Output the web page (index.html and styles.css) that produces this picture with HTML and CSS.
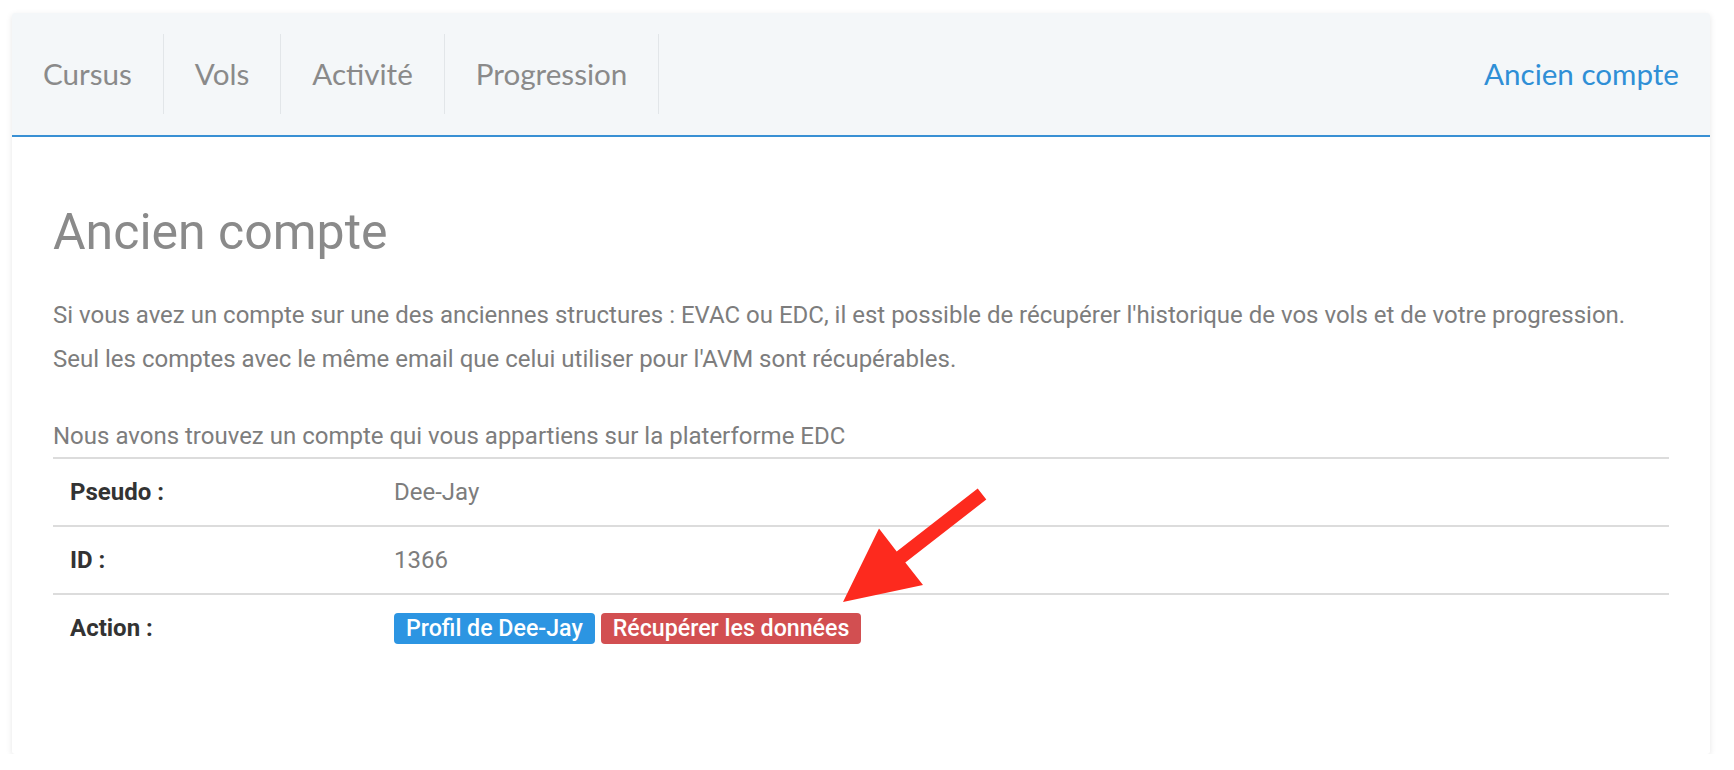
FILE: index.html
```html
<!DOCTYPE html>
<html lang="fr">
<head>
    <meta charset="UTF-8">
    <meta name="viewport" content="width=device-width, initial-scale=1.0">
    <title>Ancien compte</title>
    <link rel="stylesheet" href="styles.css">
</head>
<body>
    <div class="card">
        <div class="card-header">
            <ul class="tabs">
                <li><a href="#">Cursus</a></li>
                <li><a href="#">Vols</a></li>
                <li><a href="#">Activité</a></li>
                <li><a href="#">Progression</a></li>
            </ul>
            <a href="#" class="tab-active">Ancien compte</a>
        </div>
        <div class="card-body">
            <h1>Ancien compte</h1>
            <p class="intro">Si vous avez un compte sur une des anciennes structures : EVAC ou EDC, il est possible de récupérer l'historique de vos vols et de votre progression.<br>
            Seul les comptes avec le même email que celui utiliser pour l'AVM sont récupérables.</p>

            <div class="found">Nous avons trouvez un compte qui vous appartiens sur la platerforme EDC</div>
            <table class="account">
                <tr>
                    <th>Pseudo :</th>
                    <td>Dee-Jay</td>
                </tr>
                <tr>
                    <th>ID :</th>
                    <td>1366</td>
                </tr>
                <tr>
                    <th>Action :</th>
                    <td>
                        <a href="#" class="label label-blue">Profil de Dee-Jay</a>
                        <a href="#" class="label label-red">Récupérer les données</a>
                    </td>
                </tr>
            </table>
        </div>
    </div>

    <!-- annotation arrow -->
    <svg class="arrow" width="170" height="135" viewBox="0 0 170 135">
        <polygon points="147.7,8.5 156.3,19.5 75.3,82.5 93,105 13,122 49,48.6 66.7,71.5" fill="#fd2a1e"/>
    </svg>
</body>
</html>
```

FILE: styles.css
```css
body {
    margin: 0;
    background-color: #fff;
    font-family: Roboto, "Liberation Sans", sans-serif;
    position: relative;
}
.card {
    margin: 13px 24px 0 12px;
    height: 741px;
    background-color: #fff;
    border-radius: 3px;
    box-shadow: 0 2px 6px rgba(0,0,0,0.1);
    overflow: hidden;
}
.card-header {
    display: flex;
    justify-content: space-between;
    align-items: center;
    height: 122px;
    background-color: #f4f7f9;
    border-bottom: 2px solid #3990d4;
}
.tabs {
    display: flex;
    list-style: none;
    margin: 0;
    padding: 0;
}
.tabs li {
    border-right: 1px solid #e2e6e9;
}
.tabs a,
.tab-active {
    display: block;
    padding: 0 31px;
    line-height: 80px;
    font-family: Lato, "Open Sans", sans-serif;
    font-size: 29.6px;
    color: #8a8a8a;
    text-decoration: none;
}
.tab-active {
    color: #2f8fd6;
}
.card-body {
    padding: 67px 41px 0 41px;
}
h1 {
    margin: 0;
    font-size: 50px;
    font-weight: 400;
    line-height: 56px;
    color: #8a8a8a;
}
.intro {
    margin: 33px 0 38px;
    font-size: 24px;
    line-height: 44px;
    color: #7d7d7d;
}
.found {
    font-size: 24px;
    line-height: 34px;
    padding-bottom: 4px;
    color: #7d7d7d;
}
.account {
    width: 100%;
    border-collapse: collapse;
    font-size: 24px;
}
.account th,
.account td {
    padding: 16px 17px;
    line-height: 34px;
    text-align: left;
    border-top: 2px solid #dcdcdc;
}
.account th {
    width: 290px;
    color: #333;
    font-weight: 700;
}
.account td {
    color: #7d7d7d;
}
.label {
    display: inline-block;
    margin-top: 2px;
    padding: 0 12px;
    font-size: 23.2px;
    line-height: 31px;
    font-weight: 500;
    color: #fff;
    border-radius: 4px;
    text-decoration: none;
    vertical-align: top;
}
.label-blue {
    background-color: #2c95e2;
}
.label-red {
    background-color: #d24f51;
}
.arrow {
    position: absolute;
    left: 830px;
    top: 480px;
}
```
